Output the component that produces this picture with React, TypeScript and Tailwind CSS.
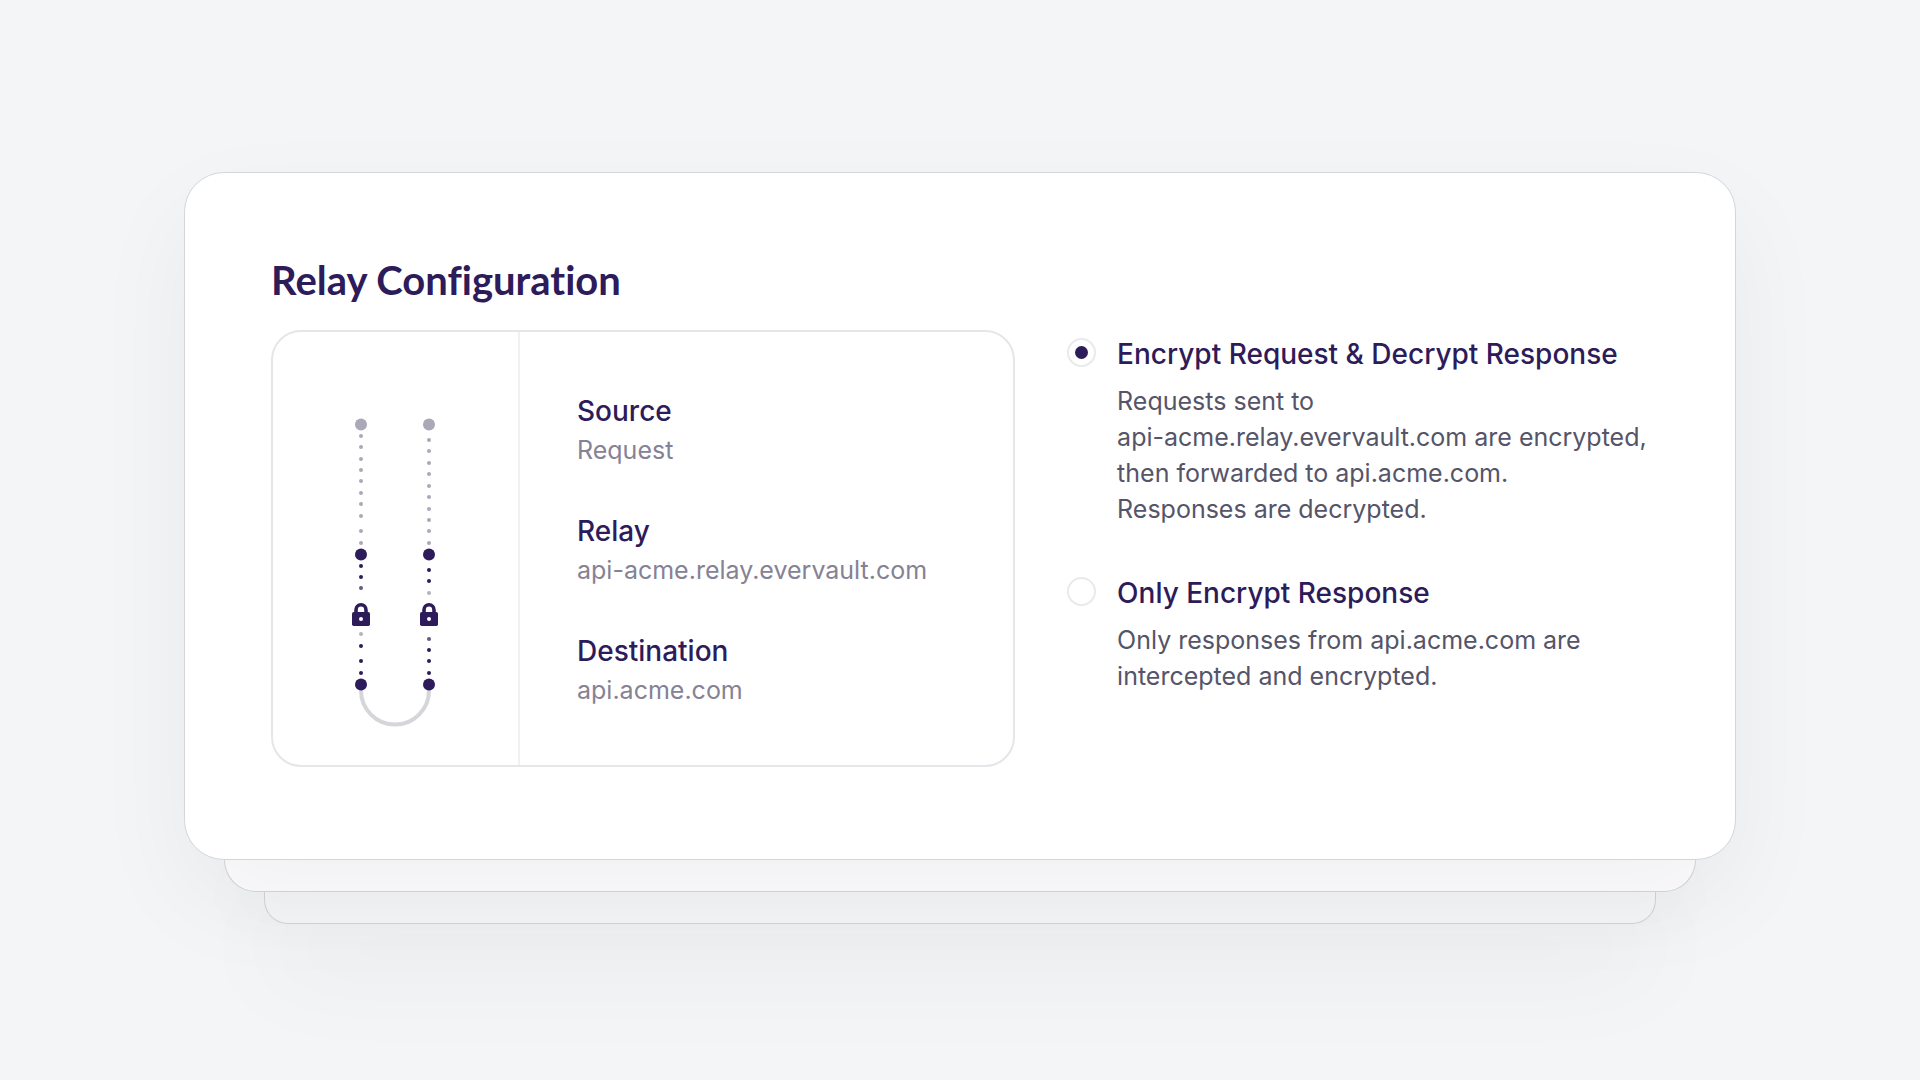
import { useState } from "react";

type Dot = { y: number; fill: string };

const INK = "#2d1b5a";
const MUTED = "#aba8b7";

// small dots of the request line, top to bottom
const requestDots: Dot[] = [
  ...[20, 31, 43, 54, 65, 77, 88, 100, 115, 127].map((y) => ({ y, fill: MUTED })),
  { y: 150, fill: INK },
  { y: 161, fill: INK },
  { y: 172, fill: "#635a80" },
  { y: 218, fill: "#b5b2c0" },
  { y: 230, fill: INK },
  { y: 245, fill: INK },
  { y: 257, fill: INK },
];

// small dots of the response line, top to bottom
const responseDots: Dot[] = [
  ...[24, 35, 47, 58, 70, 81, 93, 104, 115, 127].map((y) => ({ y, fill: MUTED })),
  { y: 154, fill: INK },
  { y: 165, fill: INK },
  { y: 177, fill: "#b5b2c0" },
  { y: 223, fill: "#635a80" },
  { y: 234, fill: INK },
  { y: 245, fill: INK },
  { y: 257, fill: INK },
];

const hops = [
  { name: "Source", value: "Request" },
  { name: "Relay", value: "api-acme.relay.evervault.com" },
  { name: "Destination", value: "api.acme.com" },
];

const modes = [
  {
    id: "both",
    title: "Encrypt Request & Decrypt Response",
    lines: ["Requests sent to", "api-acme.relay.evervault.com are encrypted,", "then forwarded to api.acme.com.", "Responses are decrypted."],
  },
  {
    id: "response",
    title: "Only Encrypt Response",
    lines: ["Only responses from api.acme.com are", "intercepted and encrypted."],
  },
];

const Line = ({ x, dots }: { x: number; dots: Dot[] }) => (
  <g>
    {dots.map((dot) => (
      <circle key={dot.y} cx={x} cy={dot.y} r="2" fill={dot.fill} />
    ))}
    <circle cx={x} cy="8.5" r="6" fill={MUTED} />
    <circle cx={x} cy="138.5" r="6" fill={INK} />
    <circle cx={x} cy="268.5" r="6" fill={INK} />
    <g transform={`translate(${x - 9} 187)`}>
      <path d="M4 10V7a5 5.2 0 0 1 10 0v3" fill="none" stroke={INK} strokeWidth="3.6" />
      <rect y="9" width="18" height="14" rx="1.8" fill={INK} />
      <circle cx="9" cy="16" r="2" fill="#fff" />
    </g>
  </g>
);

const RelayDiagram = () => (
  <svg width="88" height="312" viewBox="0 0 88 312" aria-hidden="true">
    <path d="M10 268v6.5a34 34 0 0 0 68 0v-6.5" fill="none" stroke="#d5d6da" strokeWidth="4" />
    <Line x={10} dots={requestDots} />
    <Line x={78} dots={responseDots} />
  </svg>
);

const App = () => {
  const [mode, setMode] = useState("both");

  return (
    <main className="min-h-screen overflow-hidden bg-[#f4f5f7] px-[184px] pt-43 pb-39 font-[Inter,sans-serif] text-[#2d1b5a]">
      <section className="relative z-20 rounded-[40px] border border-[#d5d6da] bg-white px-[86px] pt-[85px] pb-[92px] shadow-[0_40px_100px_rgba(0,0,0,0.05)]">
        <h1 className="font-[Lato,sans-serif] text-[40px] leading-11 font-bold [font-variant-ligatures:none]">Relay Configuration</h1>
        <div className="mt-7 grid grid-cols-[54%_1fr] gap-x-13">
          <div className="flex rounded-[30px] border-2 border-[#e5e6ea]">
            <div className="flex w-[247px] shrink-0 justify-center border-r-2 border-[#f0f1f3] pt-[84px] pr-[2px] pb-[37px]">
              <RelayDiagram />
            </div>
            <dl className="flex flex-col justify-center gap-[42px] pt-[2px] pl-[57px]">
              {hops.map((hop) => (
                <div key={hop.name}>
                  <dt className="text-[28px] leading-10 font-medium">{hop.name}</dt>
                  <dd className="text-[25px] leading-[38px] text-[#858295]">{hop.value}</dd>
                </div>
              ))}
            </dl>
          </div>
          <fieldset className="flex flex-col gap-[46px] pt-1">
            {modes.map((item) => (
              <div key={item.id} className="flex gap-[21px]">
                <input
                  type="radio"
                  id={item.id}
                  name="mode"
                  aria-describedby={`${item.id}-text`}
                  checked={mode === item.id}
                  onChange={() => setMode(item.id)}
                  className="mt-1 grid size-[29px] shrink-0 appearance-none place-content-center rounded-full border-2 border-[#e9eaed] before:size-[13px] before:rounded-full checked:before:bg-[#2d1b5a]"
                />
                <div>
                  <label htmlFor={item.id} className="block text-[28px] leading-10 font-medium whitespace-nowrap">
                    {item.title}
                  </label>
                  <p id={`${item.id}-text`} className="mt-[9px] text-[25px] leading-9 whitespace-pre text-[#555468]">
                    {item.lines.join("\n")}
                  </p>
                </div>
              </div>
            ))}
          </fieldset>
        </div>
      </section>
      <div className="relative z-10 mx-10 h-8 rounded-b-[32px] border border-t-0 border-[#d5d6da] bg-[#fdfdff] shadow-[0_20px_60px_rgba(0,0,0,0.03)]" />
      <div className="mx-20 h-8 rounded-b-[24px] border border-t-0 border-[#d5d6da] bg-[#f6f7f9] shadow-[0_40px_100px_rgba(0,0,0,0.08)]" />
    </main>
  );
};

export default App;
